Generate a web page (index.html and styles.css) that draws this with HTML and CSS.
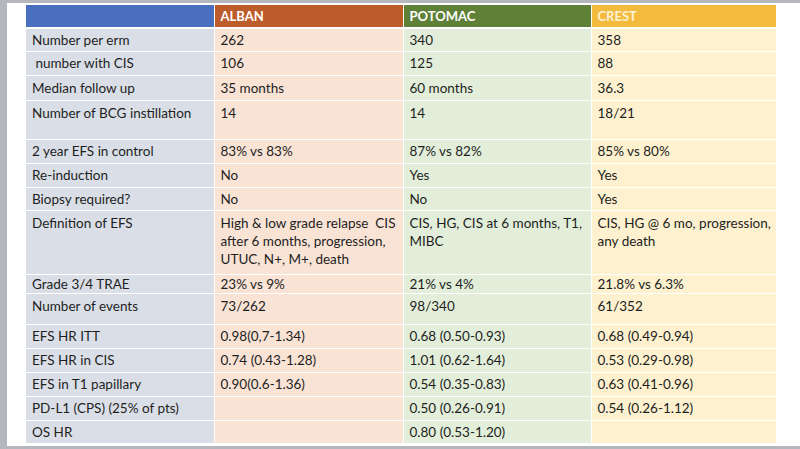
FILE: index.html
```html
<!DOCTYPE html>
<html>
<head>
<meta charset="utf-8">
<link rel="stylesheet" href="styles.css">
</head>
<body>
<div class="frame">
  <div class="slide">
    <table class="trials">
      <colgroup>
        <col class="c1"><col class="c2"><col class="c3"><col class="c4">
      </colgroup>
      <thead>
        <tr class="h-head">
          <th class="hd-blue"></th>
          <th class="hd-orange">ALBAN</th>
          <th class="hd-green">POTOMAC</th>
          <th class="hd-gold">CREST</th>
        </tr>
      </thead>
      <tbody>
        <tr class="h22"><td>Number per erm</td><td>262</td><td>340</td><td>358</td></tr>
        <tr class="h23"><td>&nbsp;number with CIS</td><td>106</td><td>125</td><td>88</td></tr>
        <tr class="h24"><td>Median follow up</td><td>35 months</td><td>60 months</td><td>36.3</td></tr>
        <tr class="h38 top"><td>Number of BCG instillation</td><td>14</td><td>14</td><td>18/21</td></tr>
        <tr class="h23"><td>2 year EFS in control</td><td>83% vs 83%</td><td>87% vs 82%</td><td>85% vs 80%</td></tr>
        <tr class="h23"><td>Re-induction</td><td>No</td><td>Yes</td><td>Yes</td></tr>
        <tr class="h22"><td>Biopsy required?</td><td>No</td><td>No</td><td>Yes</td></tr>
        <tr class="h63 top"><td>Definition of EFS</td><td>High &amp; low grade relapse&nbsp; CIS after 6 months, progression, UTUC, N+, M+, death</td><td>CIS, HG, CIS at 6 months, T1, MIBC</td><td>CIS, HG @ 6 mo, progression, any death</td></tr>
        <tr class="h19"><td>Grade 3/4 TRAE</td><td>23% vs 9%</td><td>21% vs 4%</td><td>21.8% vs 6.3%</td></tr>
        <tr class="h30 top"><td>Number of events</td><td>73/262</td><td>98/340</td><td>61/352</td></tr>
        <tr class="h23"><td>EFS HR ITT</td><td>0.98(0,7-1.34)</td><td>0.68 (0.50-0.93)</td><td>0.68 (0.49-0.94)</td></tr>
        <tr class="h23"><td>EFS HR in CIS</td><td>0.74 (0.43-1.28)</td><td>1.01 (0.62-1.64)</td><td>0.53 (0.29-0.98)</td></tr>
        <tr class="h23"><td>EFS in T1 papillary</td><td>0.90(0.6-1.36)</td><td>0.54 (0.35-0.83)</td><td>0.63 (0.41-0.96)</td></tr>
        <tr class="h23"><td>PD-L1 (CPS) (25% of pts)</td><td></td><td>0.50 (0.26-0.91)</td><td>0.54 (0.26-1.12)</td></tr>
        <tr class="h22"><td>OS HR</td><td></td><td>0.80 (0.53-1.20)</td><td></td></tr>
      </tbody>
    </table>
  </div>
</div>
</body>
</html>
```

FILE: styles.css
```css
html, body {
  margin: 0;
  padding: 0;
}
body {
  width: 800px;
  height: 449px;
  overflow: hidden;
  background: #b4b7bc;
}
.frame {
  height: 449px;
  padding: 3px 0 0 7px;
  box-sizing: border-box;
}
.slide {
  background: #ffffff;
  height: 443px;
  padding: 2px 0 0 19px;
  box-sizing: border-box;
}
.trials {
  border-collapse: collapse;
  table-layout: fixed;
  width: 750px;
  font-family: "Lato", "Open Sans", sans-serif;
  font-size: 13.5px;
  color: #1e1e1e;
}
.c1 { width: 188px; }
.c2 { width: 189px; }
.c3 { width: 188px; }
.c4 { width: 185px; }
.trials th,
.trials td {
  padding: 0 1px 0 6px;
  border: 1px solid #ffffff;
  border-top: 0;
  text-align: left;
  vertical-align: middle;
  line-height: 18px;
  overflow: hidden;
}
.trials tr > :first-child { border-left: 0; }
.trials tr > :last-child { border-right: 0; }
.trials tr.top td { vertical-align: top; padding-top: 3px; }
.h-head { height: 23px; }
.h-head th {
  font-weight: bold;
  color: #ffffff;
  font-size: 13px;
  border-bottom: 2px solid #ffffff;
}
.hd-blue { background: #4a6fbf; }
.hd-orange { background: #bc5c2a; }
.hd-green { background: #5e8137; border-left-color: #c98a5e !important; }
.hd-gold { background: #f3bb3e; color: #fdf1d4 !important; }
.trials td:nth-child(1) { background: #dadee6; }
.trials td:nth-child(2) { background: #f9e3d5; }
.trials td:nth-child(3) { background: #e2eed9; }
.trials td:nth-child(4) { background: #fdf1cf; }
.trials tbody td { border-bottom: 1px solid #ffffff; }
.h19 { height: 19px; }
.h22 { height: 23px; }
.h23 { height: 24px; }
.h24 { height: 25px; }
.h30 { height: 31px; }
.h38 { height: 39px; }
.h63 { height: 64px; }
```
